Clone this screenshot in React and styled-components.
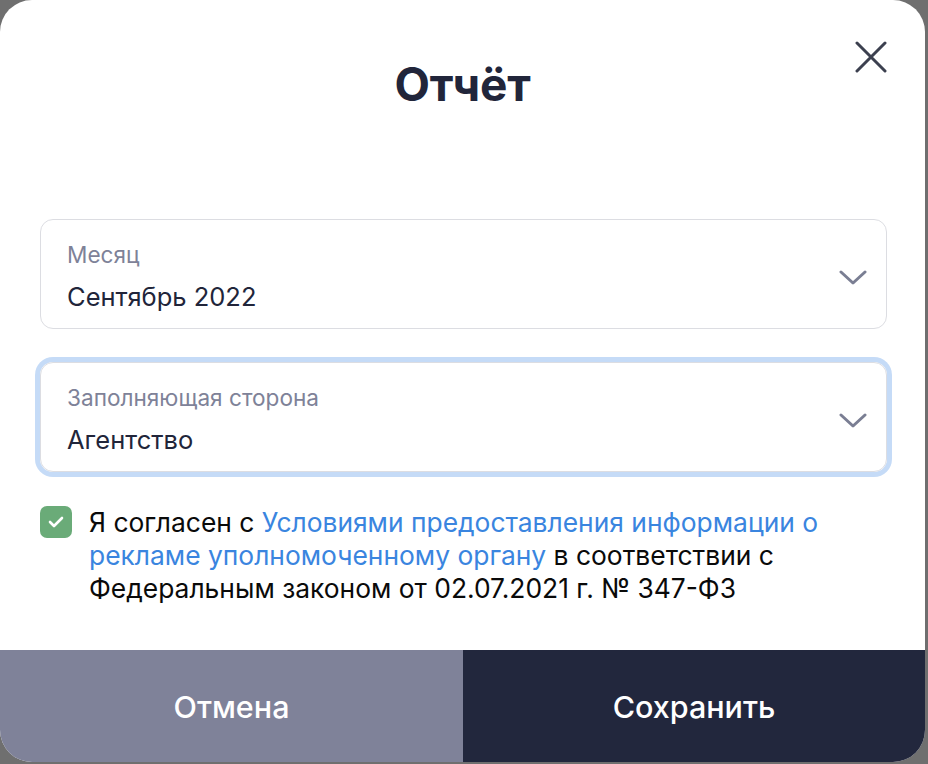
import React from "react";
import styled, { createGlobalStyle } from "styled-components";

const Global = createGlobalStyle`
  html, body { margin: 0; padding: 0; }
  body {
    background: #6f6f6f;
    font-family: Inter, "Noto Sans", "Liberation Sans", sans-serif;
    -webkit-font-smoothing: antialiased;
  }
`;

const Modal = styled.div`
  width: 925px;
  height: 762px;
  background: #fff;
  border-radius: 32px;
  overflow: hidden;
  display: flex;
  flex-direction: column;
  position: relative;
`;

const Header = styled.div`
  height: 170px;
  display: flex;
  align-items: flex-start;
  justify-content: center;
  padding-top: 54px;
  box-sizing: border-box;
`;

const Title = styled.h1`
  margin: 0;
  font-size: 46px;
  line-height: 60px;
  font-weight: 700;
  color: #21253a;
  letter-spacing: -0.2px;
`;

const CloseButton = styled.button`
  position: absolute;
  top: 41px;
  right: 38px;
  width: 32px;
  height: 32px;
  padding: 0;
  border: none;
  background: none;
  display: flex;
  align-items: center;
  justify-content: center;
  cursor: pointer;
`;

const Body = styled.div`
  flex: 1;
  padding: 49px 38px 0 40px;
  display: flex;
  flex-direction: column;
`;

const Field = styled.div`
  height: 110px;
  box-sizing: border-box;
  border: 1.5px solid #dcdde2;
  border-radius: 13px;
  padding: 6px 19px 0 26px;
  display: flex;
  align-items: center;
  justify-content: space-between;
  margin-bottom: ${(p) => p.$mb || 0}px;
  box-shadow: ${(p) => (p.$focused ? "0 0 0 5px #c5dbf7" : "none")};
`;

const FieldText = styled.div`
  display: flex;
  flex-direction: column;
`;

const Label = styled.span`
  font-size: 22.6px;
  line-height: 28px;
  color: #7e8298;
  margin-bottom: 12px;
`;

const Value = styled.span`
  font-size: 25.5px;
  line-height: 32px;
  color: #21253a;
`;

const AgreeRow = styled.div`
  display: flex;
  align-items: flex-start;
  gap: 17px;
`;

const Checkbox = styled.div`
  flex: none;
  width: 32px;
  height: 32px;
  border-radius: 7px;
  background: #6aab78;
  display: flex;
  align-items: center;
  justify-content: center;
`;

const AgreeText = styled.p`
  margin: 0;
  max-width: 760px;
  font-size: 26.4px;
  line-height: 33px;
  color: #0a0a0a;
`;

const Link = styled.a`
  color: #3a85df;
  text-decoration: none;
`;

const Footer = styled.div`
  display: grid;
  grid-template-columns: 463px 1fr;
  height: 112px;
`;

const FooterButton = styled.button`
  border: none;
  margin: 0;
  font-family: inherit;
  font-size: 30.5px;
  font-weight: 500;
  color: #fff;
  background: ${(p) => (p.$primary ? "#22273d" : "#7f8299")};
  cursor: pointer;
`;

const Chevron = () => (
  <svg width="28" height="16" viewBox="0 0 28 16" fill="none">
    <path d="M2 3 L14 14 L26 3" stroke="#7a7e93" strokeWidth="3" strokeLinecap="round" strokeLinejoin="round" />
  </svg>
);

export default function App() {
  return (
    <>
      <Global />
      <Modal>
        <Header>
          <Title>Отчёт</Title>
        </Header>
        <CloseButton aria-label="Закрыть">
          <svg width="32" height="32" viewBox="0 0 32 32" fill="none">
            <path d="M2 2 L30 30 M30 2 L2 30" stroke="#3c404f" strokeWidth="3" strokeLinecap="round" />
          </svg>
        </CloseButton>
        <Body>
          <Field $mb={33}>
            <FieldText>
              <Label>Месяц</Label>
              <Value>Сентябрь 2022</Value>
            </FieldText>
            <Chevron />
          </Field>
          <Field $focused $mb={34}>
            <FieldText>
              <Label>Заполняющая сторона</Label>
              <Value>Агентство</Value>
            </FieldText>
            <Chevron />
          </Field>
          <AgreeRow>
            <Checkbox>
              <svg width="16" height="12" viewBox="0 0 16 12" fill="none">
                <path d="M2 6 L6 10 L14 2" stroke="#fff" strokeWidth="2.6" strokeLinecap="round" strokeLinejoin="round" />
              </svg>
            </Checkbox>
            <AgreeText>
              Я согласен с{" "}
              <Link href="#">Условиями предоставления информации о рекламе уполномоченному органу</Link>{" "}
              в соответствии с Федеральным законом от 02.07.2021 г. № 347-ФЗ
            </AgreeText>
          </AgreeRow>
        </Body>
        <Footer>
          <FooterButton>Отмена</FooterButton>
          <FooterButton $primary>Сохранить</FooterButton>
        </Footer>
      </Modal>
    </>
  );
}
